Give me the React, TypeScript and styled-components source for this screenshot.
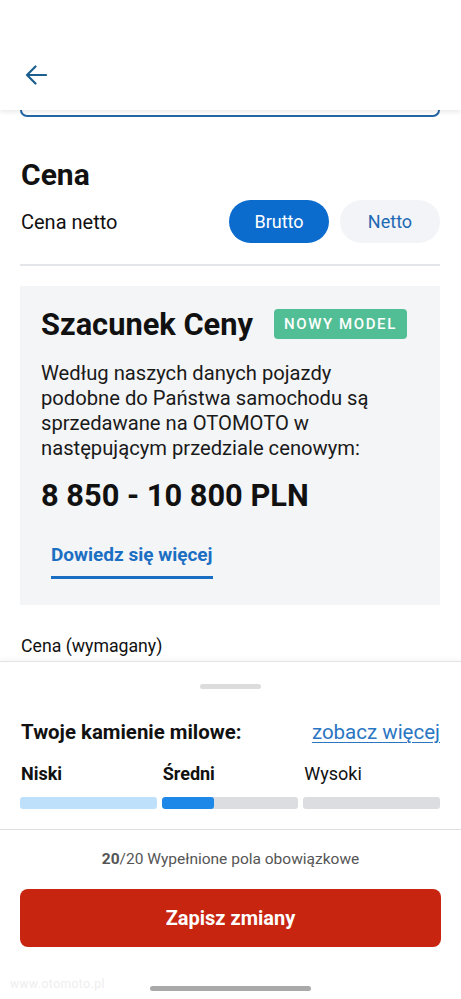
import React from 'react';
import styled, { createGlobalStyle } from 'styled-components';

const GlobalStyle = createGlobalStyle`
  html, body {
    margin: 0;
    padding: 0;
    background: #ffffff;
  }

  body {
    font-family: Roboto, "Noto Sans", "Liberation Sans", sans-serif;
    color: #111111;
  }

  * {
    box-sizing: border-box;
  }
`;

const Page = styled.div`
  position: relative;
  display: flex;
  flex-direction: column;
  width: 461px;
  height: 999px;
  overflow: hidden;
  background: #ffffff;
`;

const Header = styled.header`
  position: relative;
  z-index: 2;
  display: flex;
  align-items: flex-end;
  height: 110px;
  padding: 0 0 25px 25px;
  background: #ffffff;
  box-shadow: 0 2px 5px rgba(0, 0, 0, 0.09);
`;

const BackButton = styled.button`
  display: flex;
  padding: 0;
  border: none;
  background: none;
`;

const Content = styled.main`
  flex: 1;
  overflow: hidden;
  padding: 0 21px 0 20px;
`;

const InputPeek = styled.div`
  height: 7px;
  border: 2.5px solid #2366a6;
  border-top: none;
  border-radius: 0 0 9px 9px;
`;

const SectionTitle = styled.h2`
  margin: 40px 0 0 1px;
  font-size: 30px;
  line-height: 35px;
  font-weight: 700;
`;

const ToggleRow = styled.div`
  display: flex;
  align-items: center;
  justify-content: space-between;
  margin-top: 8px;
`;

const Label = styled.span`
  padding-left: 1px;
  font-size: 20px;
  color: #111111;
`;

const ToggleGroup = styled.div`
  display: flex;
  gap: 11px;
`;

const ToggleButton = styled.button<{ $active?: boolean }>`
  width: 100px;
  height: 43px;
  border: none;
  border-radius: 22px;
  font-family: inherit;
  font-size: 18px;
  background: ${(p) => (p.$active ? '#0b6cce' : '#f2f4f7')};
  color: ${(p) => (p.$active ? '#ffffff' : '#1e69b4')};
`;

const Divider = styled.hr`
  margin: 21px 0 0;
  border: none;
  border-top: 2px solid #e4e5e8;
`;

const EstimateCard = styled.section`
  margin-top: 20px;
  padding: 22px 21px 26px;
  background: #f4f5f7;
`;

const CardHeader = styled.div`
  display: flex;
  align-items: center;
  gap: 21px;
  height: 32px;
`;

const CardTitle = styled.h3`
  margin: 0;
  font-size: 30.8px;
  font-weight: 700;
  line-height: 35px;
`;

const Badge = styled.span`
  display: flex;
  align-items: center;
  height: 30px;
  padding: 0 10px;
  border-radius: 4px;
  background: #52be95;
  color: #ffffff;
  font-size: 15px;
  font-weight: 500;
  letter-spacing: 1.6px;
`;

const Description = styled.p`
  max-width: 345px;
  margin: 21px 0 0;
  font-size: 20.2px;
  line-height: 25px;
  color: #1a1a1a;
`;

const PriceRange = styled.div`
  margin-top: 17px;
  font-size: 30.8px;
  line-height: 35px;
  font-weight: 700;
`;

const MoreLink = styled.a`
  display: inline-block;
  margin: 30px 0 0 10px;
  padding-bottom: 9px;
  border-bottom: 3px solid #1b6fc2;
  color: #1b6fc2;
  font-size: 19px;
  line-height: 24px;
  font-weight: 700;
  text-decoration: none;
`;

const FieldLabel = styled.div`
  margin-top: 31px;
  padding-left: 1px;
  font-size: 17.7px;
  line-height: 20px;
`;

const Sheet = styled.section`
  position: relative;
  z-index: 2;
  display: flex;
  flex-direction: column;
  height: 338px;
  padding: 22px 0 0;
  background: #ffffff;
  border-top: 1px solid #e3e3e3;
  box-shadow: 0 -2px 6px rgba(0, 0, 0, 0.04);
`;

const Handle = styled.div`
  align-self: center;
  width: 61px;
  height: 5px;
  border-radius: 3px;
  background: #dcdcdc;
`;

const MilestoneHeader = styled.div`
  display: flex;
  align-items: center;
  justify-content: space-between;
  margin: 30px 21px 0;
  line-height: 26px;
`;

const MilestoneTitle = styled.span`
  font-size: 20.4px;
  font-weight: 700;
`;

const SeeMore = styled.a`
  color: #2a76c2;
  font-size: 20.5px;
  text-decoration: underline;
  text-underline-offset: 3px;
  text-decoration-thickness: 1px;
`;

const Levels = styled.div`
  display: grid;
  grid-template-columns: repeat(3, 1fr);
  column-gap: 5px;
  row-gap: 12px;
  margin: 18px 21px 0 20px;
`;

const LevelName = styled.span<{ $bold?: boolean }>`
  padding-left: 1px;
  font-size: 18px;
  line-height: 22px;
  font-weight: ${(p) => (p.$bold ? 700 : 400)};
`;

const Track = styled.div<{ $color: string }>`
  height: 12px;
  border-radius: 3px;
  overflow: hidden;
  background: ${(p) => p.$color};
`;

const TrackFill = styled.div`
  height: 100%;
  border-radius: 3px;
  background: #1e88e8;
`;

const SheetDivider = styled.div`
  margin-top: 20px;
  height: 1px;
  background: #e0e0e0;
`;

const Progress = styled.div`
  margin-top: 20px;
  text-align: center;
  font-size: 15.5px;
  line-height: 18px;
  color: #555555;

  b {
    font-weight: 700;
  }
`;

const SaveButton = styled.button`
  height: 58px;
  margin: 21px 20px 0 20px;
  border: none;
  border-radius: 8px;
  background: #c7250f;
  color: #ffffff;
  font-family: inherit;
  font-size: 20px;
  font-weight: 700;
`;

const HomeIndicator = styled.div`
  align-self: center;
  width: 161px;
  height: 5px;
  margin-top: 39px;
  border-radius: 3px;
  background: #a9a9a9;
`;

const Watermark = styled.span`
  position: absolute;
  left: 10px;
  bottom: 8px;
  font-size: 12px;
  color: #eeeeee;
  letter-spacing: 0.5px;
`;

const ArrowLeft = () => (
  <svg width="22" height="20" viewBox="0 0 22 20" fill="none">
    <path
      d="M21 10H2M10.5 1.5L2 10l8.5 8.5"
      stroke="#1c5f8f"
      strokeWidth="2.2"
      strokeLinecap="round"
      strokeLinejoin="round"
    />
  </svg>
);

const levels = [
  { name: 'Niski', bold: true, track: '#bfe0fb', fill: 0 },
  { name: 'Średni', bold: true, track: '#dcdde0', fill: 38 },
  { name: 'Wysoki', bold: false, track: '#dcdde0', fill: 0 },
];

export default function App() {
  return (
    <Page>
      <GlobalStyle />
      <Header>
        <BackButton aria-label="Wstecz">
          <ArrowLeft />
        </BackButton>
      </Header>

      <Content>
        <InputPeek />
        <SectionTitle>Cena</SectionTitle>
        <ToggleRow>
          <Label>Cena netto</Label>
          <ToggleGroup>
            <ToggleButton $active>Brutto</ToggleButton>
            <ToggleButton>Netto</ToggleButton>
          </ToggleGroup>
        </ToggleRow>
        <Divider />

        <EstimateCard>
          <CardHeader>
            <CardTitle>Szacunek Ceny</CardTitle>
            <Badge>NOWY MODEL</Badge>
          </CardHeader>
          <Description>
            Według naszych danych pojazdy podobne do Państwa samochodu są
            sprzedawane na OTOMOTO w następującym przedziale cenowym:
          </Description>
          <PriceRange>8 850 - 10 800 PLN</PriceRange>
          <MoreLink>Dowiedz się więcej</MoreLink>
        </EstimateCard>

        <FieldLabel>Cena (wymagany)</FieldLabel>
      </Content>

      <Sheet>
        <Handle />
        <MilestoneHeader>
          <MilestoneTitle>Twoje kamienie milowe:</MilestoneTitle>
          <SeeMore>zobacz więcej</SeeMore>
        </MilestoneHeader>
        <Levels>
          {levels.map((l) => (
            <LevelName key={l.name} $bold={l.bold}>
              {l.name}
            </LevelName>
          ))}
          {levels.map((l) => (
            <Track key={l.name} $color={l.track}>
              {l.fill > 0 && <TrackFill style={{ width: `${l.fill}%` }} />}
            </Track>
          ))}
        </Levels>
        <SheetDivider />
        <Progress>
          <b>20</b>/20 Wypełnione pola obowiązkowe
        </Progress>
        <SaveButton>Zapisz zmiany</SaveButton>
        <HomeIndicator />
        <Watermark>www.otomoto.pl</Watermark>
      </Sheet>
    </Page>
  );
}
